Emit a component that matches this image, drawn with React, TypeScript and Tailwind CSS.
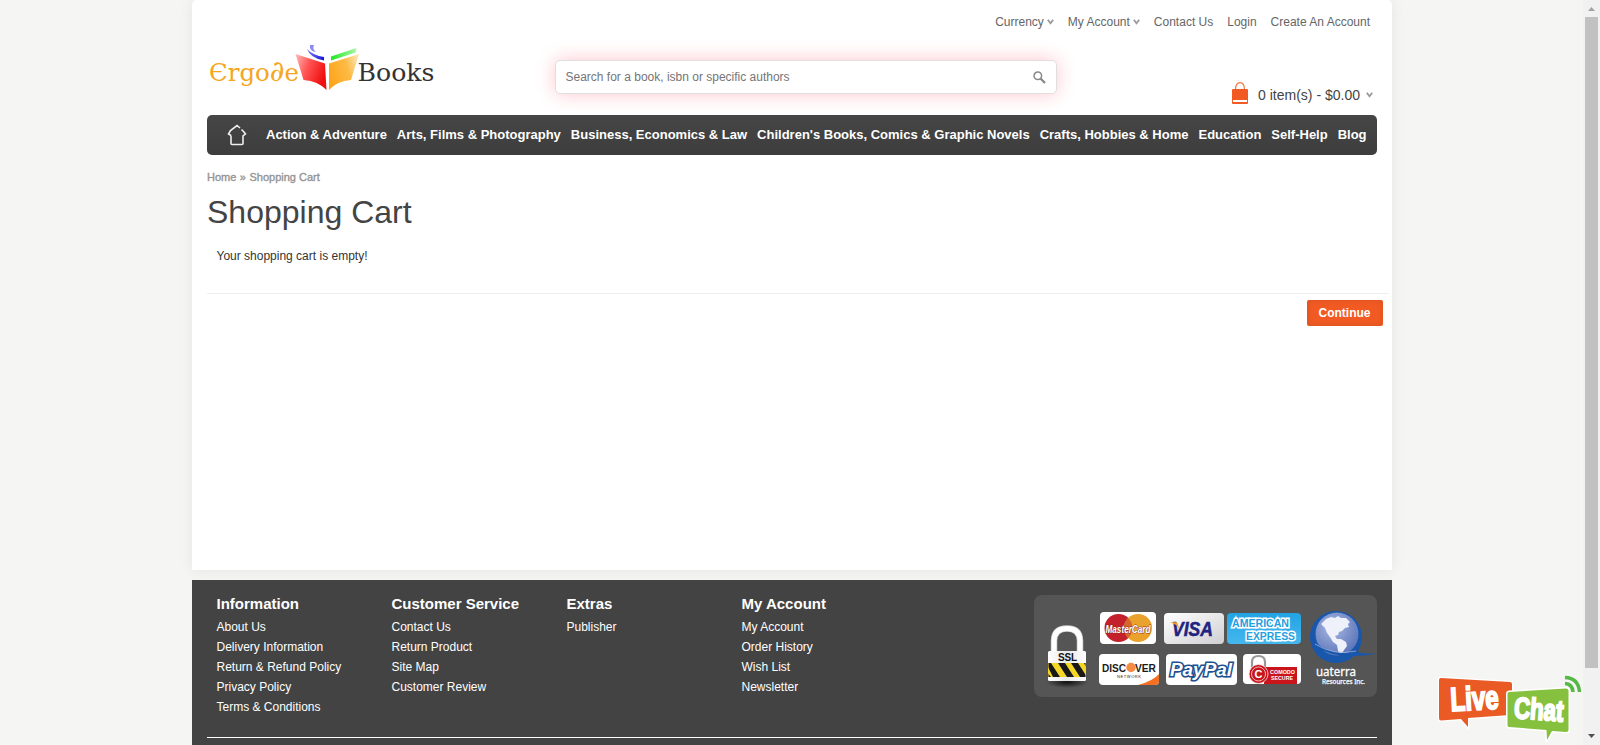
import React from "react";

const NAV = [
  "Action & Adventure",
  "Arts, Films & Photography",
  "Business, Economics & Law",
  "Children's Books, Comics & Graphic Novels",
  "Crafts, Hobbies & Home",
  "Education",
  "Self-Help",
  "Blog",
];

const COLUMNS = [
  {
    title: "Information",
    links: ["About Us", "Delivery Information", "Return & Refund Policy", "Privacy Policy", "Terms & Conditions"],
  },
  { title: "Customer Service", links: ["Contact Us", "Return Product", "Site Map", "Customer Review"] },
  { title: "Extras", links: ["Publisher"] },
  { title: "My Account", links: ["My Account", "Order History", "Wish List", "Newsletter"] },
];

function Caret({ className }: { className?: string }) {
  return (
    <svg width="7" height="6" viewBox="0 0 7 6" className={className}>
      <path d="M0.8 0.8 L3.5 4.2 L6.2 0.8" fill="none" stroke="#999" strokeWidth="1.8" />
    </svg>
  );
}

function Logo() {
  return (
    <svg width="232" height="52" viewBox="207 42 232 52">
      <defs>
        <linearGradient id="red" x1="0" y1="0" x2="1" y2="0.45">
          <stop offset="0" stopColor="#fbb" />
          <stop offset="0.45" stopColor="#f55" />
          <stop offset="1" stopColor="#f00f0f" />
        </linearGradient>
        <linearGradient id="gold" x1="0" y1="0.6" x2="1" y2="0.2">
          <stop offset="0" stopColor="#ffa51c" />
          <stop offset="0.6" stopColor="#fcbb45" />
          <stop offset="1" stopColor="#fde3b0" />
        </linearGradient>
        <linearGradient id="green">
          <stop offset="0" stopColor="#1ee81e" />
          <stop offset="1" stopColor="#a8f7a8" />
        </linearGradient>
        <linearGradient id="blue">
          <stop offset="0" stopColor="#7d7df5" />
          <stop offset="1" stopColor="#1414d8" />
        </linearGradient>
      </defs>
      <g fontFamily="'DejaVu Serif', serif" fontSize="25">
        <text x="209" y="81" fill="#f5a623" textLength="90" lengthAdjust="spacingAndGlyphs">Єrgo<tspan fontSize="29">∂</tspan>e</text>
        <text x="357.500" y="81" fill="#333" textLength="77" lengthAdjust="spacingAndGlyphs">Books</text>
      </g>
      <path d="M295.500 54 L325 63.500 L326.500 90 Q318 81 303.500 80 Z" fill="url(#red)" />
      <path d="M329 63.500 L359 54 L351 80 Q337 81 329 90 Z" fill="url(#gold)" />
      <path d="M331 56.500 L356.500 48 L355.500 52.500 L331 60.500 Z" fill="url(#green)" />
      <path d="M307 49 Q313 55.500 324 57 L324 60.500 Q310 58 307 49 Z" fill="url(#blue)" />
      <path d="M310 45 L314 45 Q312 49 316 52 Q309 51 310 45 Z" fill="#8a8af3" />
    </svg>
  );
}

function PaymentBadges() {
  return (
    <svg width="343" height="102" viewBox="0 0 343 102" fontFamily="'Liberation Sans', sans-serif">
      <defs>
        <linearGradient id="visa" x1="0" y1="0" x2="1" y2="1">
          <stop offset="0" stopColor="#fff" />
          <stop offset="1" stopColor="#cfcfd2" />
        </linearGradient>
        <linearGradient id="amex" x1="0" y1="0" x2="0" y2="1">
          <stop offset="0" stopColor="#22a3e3" />
          <stop offset="1" stopColor="#45b8ee" />
        </linearGradient>
        <linearGradient id="steel">
          <stop offset="0" stopColor="#fff" />
          <stop offset="0.5" stopColor="#e8e8e8" />
          <stop offset="1" stopColor="#fff" />
        </linearGradient>
        <radialGradient id="globe" cx="0.4" cy="0.35" r="0.7">
          <stop offset="0" stopColor="#a9b9e2" />
          <stop offset="1" stopColor="#5a73b8" />
        </radialGradient>
        <radialGradient id="shade">
          <stop offset="0" stopColor="#111" />
          <stop offset="1" stopColor="#111" stopOpacity="0" />
        </radialGradient>
        <clipPath id="stripes"><rect x="14.500" y="68" width="37" height="14" /></clipPath>
        <clipPath id="disc"><rect x="65" y="59" width="60" height="31" rx="4" /></clipPath>
      </defs>
      <rect width="343" height="102" rx="8" fill="#555" />
      <ellipse cx="33" cy="87" rx="21" ry="6" fill="url(#shade)" />
      <path d="M20 57 V46 Q20 33.500 33 33.500 Q46 33.500 46 46 V57" fill="none" stroke="#c9c9c9" strokeWidth="6.500" />
      <path d="M20 57 V46 Q20 33.500 33 33.500 Q46 33.500 46 46 V57" fill="none" stroke="#fff" strokeWidth="5" />
      <rect x="14" y="56" width="38" height="30" rx="1.500" fill="url(#steel)" />
      <rect x="14" y="68" width="38" height="14" fill="#f4d624" />
      <g clipPath="url(#stripes)" fill="#181818">
        <path d="M12 68h5l9 14h-7z M24 68h7l9 14h-7z M37 68h7l9 14h-7z M12 76l5 6h-5z M50 68h4v8z" />
      </g>
      <text x="33.500" y="66" fontSize="10" fontWeight="bold" textAnchor="middle" fill="#111" textLength="19">SSL</text>

      <rect x="66" y="17" width="56" height="32" rx="4" fill="#fff" />
      <circle cx="84.500" cy="33" r="14" fill="#c3202b" />
      <circle cx="104" cy="33" r="14" fill="#e9a22c" />
      <path d="M94.200 23 A14 14 0 0 1 94.200 43 A14 14 0 0 1 94.200 23" fill="#d4652c" />
      <text x="71.500" y="37.500" fontSize="10.500" fontWeight="bold" fontStyle="italic" fill="#fff" stroke="#8a2a24" strokeWidth="0.800" paintOrder="stroke" textLength="45" lengthAdjust="spacingAndGlyphs">MasterCard</text>

      <rect x="130" y="18" width="60" height="31" rx="4" fill="url(#visa)" />
      <text x="138" y="41" fontSize="19.500" fontWeight="bold" fontStyle="italic" fill="#20237f" stroke="#20237f" strokeWidth="0.500" textLength="41" lengthAdjust="spacingAndGlyphs">VISA</text>
      <path d="M136 27.200 h7 l2.500 7 q-2.500-5-9.500-7z" fill="#f49b20" />

      <rect x="193" y="18" width="74" height="31" rx="4" fill="url(#amex)" />
      <g fill="#249fdf" stroke="#fff" strokeWidth="3" paintOrder="stroke" fontWeight="bold" fontSize="11">
        <text x="198" y="31.500" textLength="57" lengthAdjust="spacingAndGlyphs">AMERICAN</text>
        <text x="212" y="44.500" textLength="49" lengthAdjust="spacingAndGlyphs">EXPRESS</text>
      </g>

      <rect x="65" y="59" width="60" height="31" rx="4" fill="#fff" />
      <g clipPath="url(#disc)"><path d="M104 90 Q119 86 125 79 V91 H104z" fill="#f36f21" /></g>
      <circle cx="97" cy="72.500" r="4.700" fill="#f58b45" />
      <g fill="#1b1b1b" fontWeight="bold" fontSize="11">
        <text x="68" y="76.500" textLength="24" lengthAdjust="spacingAndGlyphs">DISC</text>
        <text x="101" y="76.500" textLength="21" lengthAdjust="spacingAndGlyphs">VER</text>
        <text x="83" y="83" fontSize="4" fontWeight="normal" textLength="24">NETWORK</text>
      </g>

      <rect x="132" y="59" width="71" height="31" rx="4" fill="#fff" />
      <text x="136" y="80.500" fontSize="19" fontWeight="bold" fontStyle="italic" fill="#fff" stroke="#21508f" strokeWidth="3.200" paintOrder="stroke" textLength="62" lengthAdjust="spacingAndGlyphs">PayPal</text>

      <rect x="209" y="59" width="58" height="30" rx="4" fill="#fff" />
      <path d="M218 72 V67 Q218 61 224.500 61 Q231 61 231 67 V72" fill="none" stroke="#999" strokeWidth="2.200" />
      <rect x="230" y="72" width="33" height="17" fill="#c9141b" />
      <circle cx="224.500" cy="79" r="9.500" fill="#c9141b" stroke="#eee" strokeWidth="0.800" />
      <circle cx="224.500" cy="79" r="7" fill="none" stroke="#fff" strokeWidth="0.700" />
      <text x="224.500" y="83" fontSize="11" fontWeight="bold" textAnchor="middle" fill="#fff">C</text>
      <g fill="#fff" fontWeight="bold" fontSize="5.500">
        <text x="236" y="78.500" textLength="25" lengthAdjust="spacingAndGlyphs">COMODO</text>
        <text x="237" y="85" textLength="22" lengthAdjust="spacingAndGlyphs">SECURE</text>
      </g>

      <circle cx="302" cy="42" r="26" fill="#1857ac" />
      <circle cx="303" cy="39" r="21.500" fill="url(#globe)" />
      <path d="M287 29 l5-5 5-2 4 1 3-2 3 2 5 0 4 4 -2 2 1 3 -4 1 -3 3 -3 1 -1 3 -3 1 2 3 4 0 5 3 1 4 -3 4 -3 5 -3-4 -1-6 -4-3 -3-5 -3-4 -2-5z" fill="#eef0fa" />
      <path d="M279 51 Q304 66 343 58.500 Q328 59 325 57 Q300 62 282 48z" fill="#1857ac" />
      <path d="M281 49 Q300 61 322 56" stroke="#9db5de" strokeWidth="0.800" fill="none" />
      <g fill="#fff" fontFamily="'Noto Sans', 'Open Sans', sans-serif">
        <text x="282" y="81" fontSize="12.500" stroke="#fff" strokeWidth="0.300" textLength="40" lengthAdjust="spacingAndGlyphs">uaterra</text>
        <text x="288" y="89" fontSize="7" stroke="#fff" strokeWidth="0.250" textLength="43" lengthAdjust="spacingAndGlyphs">Resources Inc.</text>
      </g>
    </svg>
  );
}

function LiveChat() {
  return (
    <svg width="146" height="68" viewBox="1436 674 146 68" fontFamily="'Liberation Sans', sans-serif" fontWeight="bold">
      <path d="M1441 678 L1510 682 Q1512 682 1512 684 V713 Q1512 715 1510 715 L1468 718 V727 L1461 719 L1441 720.500 Q1439 720.500 1439 718 V680 Q1439 678 1441 678z" fill="#ea5a24" stroke="#fff" strokeWidth="2.500" paintOrder="stroke" />
      <path d="M1509 692 L1566 688.500 Q1568.500 688.500 1568.500 691 V730 Q1568.500 732 1566 732 L1552 731 L1547 740 L1546.500 730 L1509 727 Q1507.500 727 1507.500 725 V694 Q1507.500 692 1509 692z" fill="#86c03f" stroke="#fff" strokeWidth="3" paintOrder="stroke" />
      <g fill="#fff" stroke="#fff" strokeWidth="2">
        <text transform="translate(1451 711) rotate(-3) scale(0.72 1)" fontSize="33" textLength="67" lengthAdjust="spacingAndGlyphs">Live</text>
        <text transform="translate(1513.500 718) rotate(4) scale(0.65 1)" fontSize="30" textLength="76" lengthAdjust="spacingAndGlyphs">Chat</text>
      </g>
      <path d="M1565 683.500 Q1572.500 684 1573 692" fill="none" stroke="#56b947" strokeWidth="3.500" />
      <path d="M1565 677.500 Q1578.500 678 1579.500 692" fill="none" stroke="#56b947" strokeWidth="3.500" />
    </svg>
  );
}

function Scrollbar() {
  return (
    <div className="flex h-[745px] w-[17px] shrink-0 flex-col items-center justify-between bg-[#f1f1f1]">
      <svg width="17" height="17" viewBox="0 0 17 17"><path d="M5 11 L8.500 7 L12 11z" fill="#a3a3a3" /></svg>
      <div className="h-[651px] w-[13px] bg-[#c1c1c1]" />
      <div className="grow" />
      <svg width="17" height="17" viewBox="0 0 17 17"><path d="M5 6 H12 L8.500 10z" fill="#505050" /></svg>
    </div>
  );
}

export default function App() {
  return (
    <div className="relative flex h-[745px] w-[1600px] overflow-hidden bg-[#f5f5f3] font-['Liberation_Sans',Arial,sans-serif] text-[12px] text-[#333]">
      <div className="flex grow flex-col items-center pr-px pl-[2px]">
        <main className="flex h-[570px] w-[1200px] shrink-0 flex-col rounded-t-[5px] bg-white px-[15px] shadow-[0_0_15px_rgba(0,0,0,0.07)]">
          <header className="flex h-[115px]">
            <div className="w-[348px] pt-[42px]"><Logo /></div>
            <div className="w-[502px] pt-[60px]">
              <div className="flex h-[34px] items-center justify-between rounded-[5px] border border-[#dfdfdf] bg-white pr-[10px] pl-[9.5px] text-[#757575] shadow-[0_0_20px_rgba(255,0,40,0.23)]">
                <span>Search for a book, isbn or specific authors</span>
                <svg width="13" height="13" viewBox="0 0 13 13" fill="none" stroke="#888">
                  <circle cx="4.800" cy="4.800" r="3.800" strokeWidth="1.500" />
                  <path d="M7.500 7.500 L12 12" strokeWidth="2.300" />
                </svg>
              </div>
            </div>
            <div className="flex w-[320px] flex-col items-end">
              <nav className="flex h-[44px] items-center gap-[14px] pr-[7px] whitespace-nowrap text-[#666]">
                <span className="flex items-center gap-[3px]">Currency<Caret /></span>
                <span className="flex items-center gap-[3px]">My Account<Caret /></span>
                <span>Contact Us</span>
                <span>Login</span>
                <span>Create An Account</span>
              </nav>
              <div className="mt-[38px] flex items-center pr-[4px] text-[14px] leading-[26px] text-[#444]">
                <svg width="16" height="22" viewBox="0 0 16 22" className="relative -top-[2px] mr-[10px]">
                  <path d="M3.500 8 Q3.500 0.700 8 0.700 Q12.500 0.700 12.500 8" fill="none" stroke="#f47a4b" strokeWidth="1.300" />
                  <rect y="7" width="16" height="15" rx="1" fill="#f15a23" />
                  <rect x="1" y="18" width="14" height="2" fill="#fff" />
                </svg>
                <span>0 item(s) - $0.00</span>
                <Caret className="ml-[6px]" />
              </div>
            </div>
          </header>

          <nav className="flex h-[40px] shrink-0 items-center rounded-[5px] bg-linear-to-b from-[#464646] to-[#3d3d3d] text-[13px] font-bold whitespace-nowrap text-white">
            <svg width="20" height="22" viewBox="0 0 20 22" className="mr-[14px] ml-[20px] shrink-0">
              <path d="M4 11.500 L1.500 10 L3.500 6.500 L10 1.500 L13 4 M14.500 5.500 L16.500 7.500 L18.500 10 L16 12 V19.500 Q16 20.500 15 20.500 H5 Q4 20.500 4 19.500 V11.500" fill="none" stroke="#eee" strokeWidth="1.600" />
            </svg>
            {NAV.map((item) => (
              <span key={item} className="px-[5px] leading-[40px]">{item}</span>
            ))}
          </nav>

          <div className="mt-[15px] flex gap-[3.5px] text-[11px] leading-[14px] text-[#949494] [-webkit-text-stroke:0.35px_#949494]">
            <span>Home</span><span>»</span><span>Shopping Cart</span>
          </div>
          <h1 className="mt-[9px] text-[32px] leading-[38px] text-[#444]">Shopping Cart</h1>
          <div className="mt-[17px] pl-[9.5px] leading-[16px]">Your shopping cart is empty!</div>
          <div className="mt-[29px] -mr-[12px] flex justify-end border-t border-[#eee] pt-[6px] pr-[6px]">
            <button className="h-[26px] w-[76px] rounded-[2px] bg-[#f15a23] pr-px text-[12px] font-bold text-white shadow-[inset_0_0_6px_rgba(0,0,0,0.1)]">Continue</button>
          </div>
        </main>

        <footer className="mt-[10px] h-[165px] w-[1200px] shrink-0 bg-[#434343] px-[15px] pt-[15px] text-white">
          <div className="flex h-[143px] border-b border-white">
            {COLUMNS.map((col) => (
              <div key={col.title} className="w-[175px] pl-[9.5px]">
                <h3 className="text-[15px] leading-[17px] font-bold">{col.title}</h3>
                <ul className="mt-[5px] leading-[20px]">
                  {col.links.map((link) => <li key={link}>{link}</li>)}
                </ul>
              </div>
            ))}
            <div className="ml-auto"><PaymentBadges /></div>
          </div>
        </footer>
      </div>
      <Scrollbar />
      <div className="absolute top-[674px] left-[1436px]"><LiveChat /></div>
    </div>
  );
}
